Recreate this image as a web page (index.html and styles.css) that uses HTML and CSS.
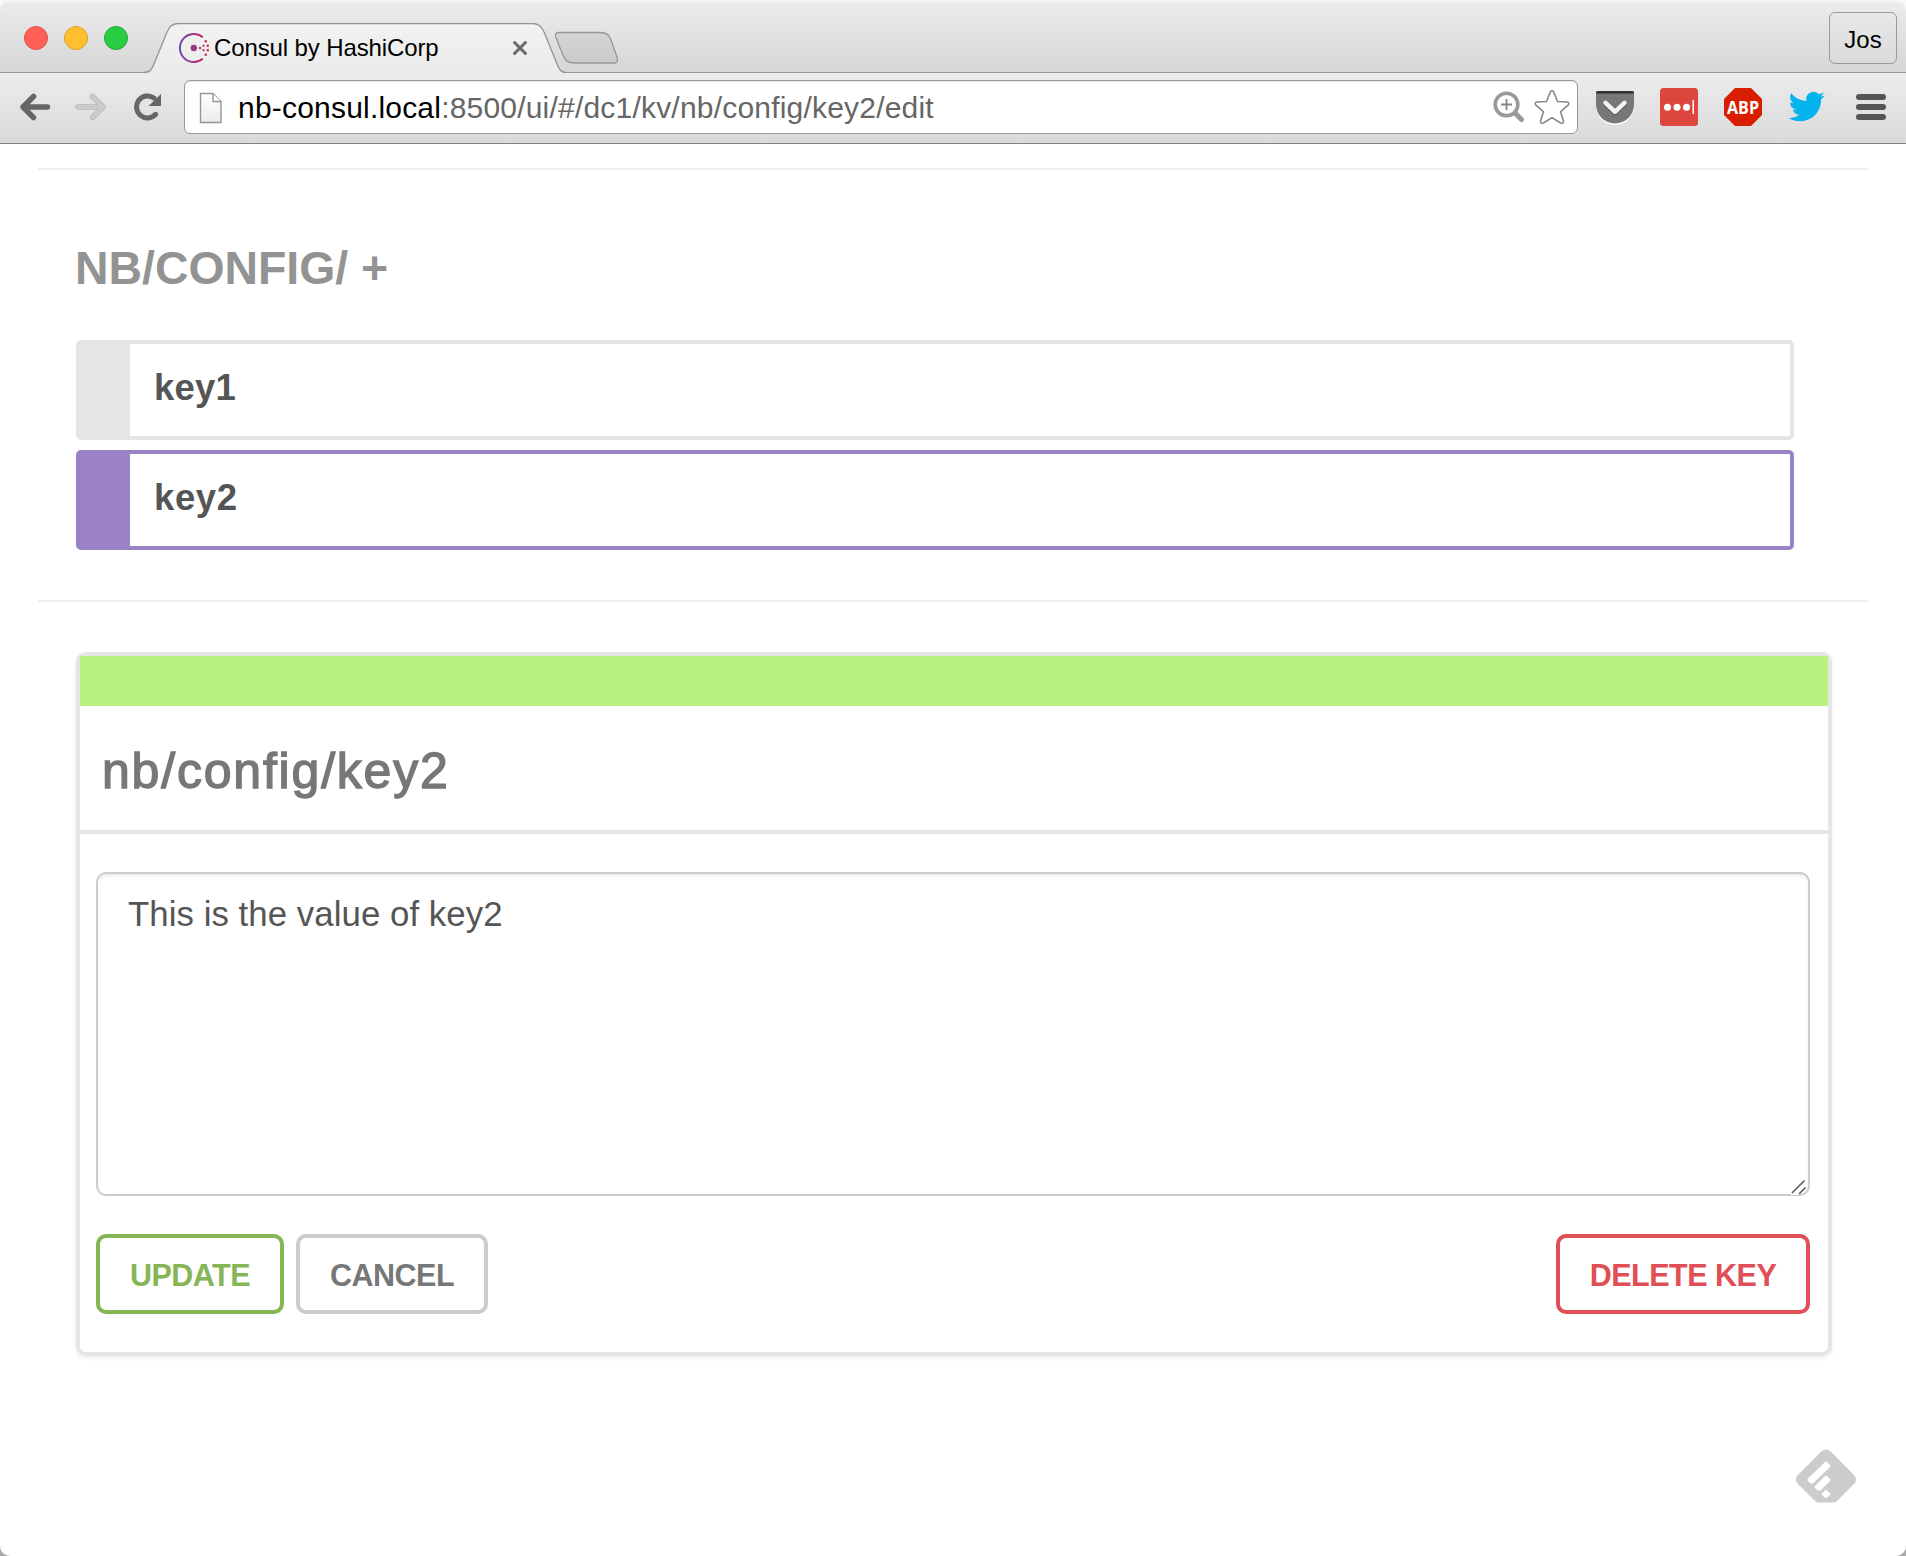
FILE: index.html
```html
<!DOCTYPE html>
<html lang="en">
<head>
<meta charset="utf-8">
<title>Consul by HashiCorp</title>
<link rel="stylesheet" href="styles.css">
</head>
<body>
<div class="window">
  <header class="tabstrip">
    <div class="lights"><i class="light red"></i><i class="light yellow"></i><i class="light green"></i></div>
    <div class="tab">
      <svg class="tab-shape" width="424" height="51" viewBox="0 0 424 51">
        <defs><linearGradient id="tabfill" x1="0" y1="0" x2="0" y2="1"><stop offset="0" stop-color="#f2f2f2"/><stop offset="1" stop-color="#ebebeb"/></linearGradient></defs>
        <path d="M0 51V49.500C6 49.500 7.500 47 10 41L22 11.500C25 4.500 27 .5 34 .5H388C395 .5 397.500 3.500 400.500 10L413 41C415.500 47 417 49.500 422 49.500V51Z" fill="url(#tabfill)"/>
        <path d="M0 49.500C6 49.500 7.500 47 10 41L22 11.500C25 4.500 27 .5 34 .5H388C395 .5 397.500 3.500 400.500 10L413 41C415.500 47 417 49.500 422 49.500" fill="none" stroke="#939393" stroke-width="1.300"/>
      </svg>
      <svg class="favicon" width="32" height="32" viewBox="0 0 32 32">
        <defs><linearGradient id="ring" x1="0" y1="0" x2="1" y2="0"><stop offset="0" stop-color="#694fb0"/><stop offset=".5" stop-color="#8f3d8c"/><stop offset="1" stop-color="#ca2754"/></linearGradient></defs>
        <path d="M24.800 5.200A14 14 0 1 0 24.800 26.800" fill="none" stroke="url(#ring)" stroke-width="2"/>
        <circle cx="15.800" cy="16" r="3.200" fill="#963b80"/>
        <g fill="#c62a52"><circle cx="22" cy="16" r="1.200"/><circle cx="25.500" cy="13.800" r="1.100"/><circle cx="25.500" cy="18.200" r="1.100"/><circle cx="27.700" cy="9.200" r="1.200"/><circle cx="27.700" cy="22.800" r="1.200"/><circle cx="29.800" cy="13.800" r="1.200"/><circle cx="29.800" cy="18.200" r="1.200"/></g>
      </svg>
      <span class="tab-title">Consul by HashiCorp</span>
      <svg class="tab-close" width="16" height="16" viewBox="0 0 16 16"><path d="M2.500 2.500L13.500 13.500M13.500 2.500L2.500 13.500" stroke="#6a6a6a" stroke-width="3" stroke-linecap="round"/></svg>
    </div>
    <svg class="newtab" width="66" height="34" viewBox="0 0 66 34">
      <defs><linearGradient id="ntfill" x1="0" y1="0" x2="0" y2="1"><stop offset="0" stop-color="#d4d4d4"/><stop offset="1" stop-color="#cacaca"/></linearGradient></defs>
      <path d="M6 1.500H47C54 1.500 56 4 58 9L64 26C65 30 64.500 32 61 32H21C14 32 12 29 9.500 23L3 6.500C1.800 3 2.500 1.500 6 1.500Z" fill="url(#ntfill)" stroke="#969696" stroke-width="1.300"/>
    </svg>
    <div class="profile">Jos</div>
  </header>
  <nav class="toolbar">
    <svg class="ico back" width="32" height="28" viewBox="0 0 32 28"><path d="M28.500 14H5M14.500 3.500L4 14L14.500 24.500" fill="none" stroke="#666" stroke-width="5.500" stroke-linecap="round" stroke-linejoin="round"/></svg>
    <svg class="ico fwd" width="32" height="28" viewBox="0 0 32 28"><path d="M3 14H27M17.500 3.500L28 14L17.500 24.500" fill="none" stroke="#b8b8b8" stroke-width="5.500" stroke-linecap="round" stroke-linejoin="round"/><path d="M3 14H27M17.500 3.500L28 14L17.500 24.500" fill="none" stroke="#cbcbcb" stroke-width="4" stroke-linecap="round" stroke-linejoin="round"/></svg>
    <svg class="ico reload" width="30" height="28" viewBox="0 0 30 28"><path d="M22.700 21.300A11 11 0 1 1 21 5" fill="none" stroke="#666" stroke-width="5" stroke-linecap="round"/><path d="M28 1V13H15.500Z" fill="#666"/></svg>
    <div class="omnibox">
      <svg class="page-ico" width="24" height="32" viewBox="0 0 24 32"><defs><linearGradient id="pg" x1="0" y1="0" x2="0" y2="1"><stop offset="0" stop-color="#fff"/><stop offset="1" stop-color="#ececec"/></linearGradient></defs><path d="M1.500 1.500H14L22 9.500V30.500H1.500Z" fill="url(#pg)" stroke="#959595" stroke-width="1.400"/><path d="M14 1.500V9.500H22" fill="#fff" stroke="#959595" stroke-width="1.400"/></svg>
      <span class="url"><b>nb-consul.local</b>:8500/ui/#/dc1/kv/nb/config/key2/edit</span>
      <svg class="zoom-ico" width="32" height="32" viewBox="0 0 32 32"><circle cx="13.500" cy="13.500" r="11.300" fill="none" stroke="#999" stroke-width="3.600"/><path d="M22 22L28.500 28.500" stroke="#999" stroke-width="5" stroke-linecap="round"/><path d="M13.500 8V19M8 13.500H19" stroke="#858585" stroke-width="1.800"/></svg>
      <svg class="star-ico" width="36" height="36" viewBox="0 0 36 36"><path d="M16.300 3Q18 .2 19.700 3L23.500 12.500L33.200 13Q36 14 34 16.200L26.500 22.800L29.500 32Q29.500 35 26.700 34L18 28.700L9.300 34Q6.500 35 6.500 32L9.500 22.800L2 16.200Q0 14 2.800 13L12.500 12.500Z" fill="#fff" stroke="#888" stroke-width="1.600" stroke-linejoin="round"/></svg>
    </div>
    <div class="exts">
      <svg width="38" height="38" viewBox="0 0 38 38"><path d="M0 5H38V18A19 19 0 0 1 0 18Z" fill="#fff"/><path d="M2 3H36Q38 3 38 5V16.500A19 19 0 0 1 0 16.500V5Q0 3 2 3Z" fill="#777"/><path d="M0 5.500V5Q0 3 2 3H36Q38 3 38 5V5.500Z" fill="#303030"/><path d="M9.500 16L19 24.800L28.500 16" fill="none" stroke="#4b4b4b" stroke-width="4.500" stroke-linecap="round" stroke-linejoin="round"/><path d="M9.500 14.800L19 23.800L28.500 14.800" fill="none" stroke="#f2f2f2" stroke-width="4.500" stroke-linecap="round" stroke-linejoin="round"/></svg>
      <svg width="38" height="38" viewBox="0 0 38 38"><rect width="38" height="38" rx="3.500" fill="#dd453f"/><g fill="#fff"><circle cx="7.500" cy="19.300" r="3.500"/><circle cx="17" cy="19.300" r="3.500"/><circle cx="26.500" cy="19.300" r="3.500"/><rect x="32.500" y="12" width="1.500" height="14"/></g></svg>
      <svg width="38" height="38" viewBox="0 0 38 38"><path d="M11 0H27L38 11V27L27 38H11L0 27V11Z" fill="#d91e00"/><text x="19" y="26" text-anchor="middle" textLength="32" lengthAdjust="spacingAndGlyphs" class="abp">ABP</text></svg>
      <svg width="38" height="38" viewBox="0 0 38 38"><path transform="translate(.7 .6) scale(1.500)" d="M23.950 4.570a10 10 0 0 1-2.820.77 4.960 4.960 0 0 0 2.160-2.720c-.95.550-2 .95-3.130 1.180a4.920 4.920 0 0 0-8.380 4.480C7.690 8.090 4.070 6.130 1.640 3.160a4.820 4.820 0 0 0-.67 2.480c0 1.710.87 3.210 2.190 4.100a4.900 4.900 0 0 1-2.230-.62v.06a4.920 4.920 0 0 0 3.950 4.830 5 5 0 0 1-2.210.080 4.940 4.940 0 0 0 4.600 3.420A9.870 9.870 0 0 1 0 19.540a13.990 13.990 0 0 0 7.560 2.210c9.050 0 14-7.500 14-13.980 0-.21 0-.42-.020-.63a9.940 9.940 0 0 0 2.460-2.550z" fill="#03b3ee"/></svg>
      <svg class="menu" width="30" height="28" viewBox="0 0 30 28"><g fill="#555"><rect y="1" width="30" height="6" rx="3"/><rect y="11" width="30" height="6" rx="3"/><rect y="21" width="30" height="6" rx="3"/></g></svg>
    </div>
  </nav>
  <main class="page">
    <section class="keys">
      <h2 class="heading">NB/CONFIG/ +</h2>
      <div class="key">key1</div>
      <div class="key active">key2</div>
    </section>
    <section class="panel">
      <div class="panel-bar"></div>
      <h3 class="panel-title">nb/config/key2</h3>
      <div class="panel-body">
        <div class="value">This is the value of key2
          <svg class="grip" width="16" height="16" viewBox="0 0 16 16"><path d="M0 16V5L11 0H16V5L8 16Z" fill="#fff"/><path d="M1 14L13.500 1.500M8 15L14.500 8.500" stroke="#606060" stroke-width="1.700"/></svg>
        </div>
        <div class="actions">
          <button class="btn update">UPDATE</button>
          <button class="btn cancel">CANCEL</button>
          <button class="btn delete">DELETE KEY</button>
        </div>
      </div>
    </section>
    <svg class="feedly" width="60" height="54" viewBox="0 0 60 54"><path d="M25.500 2.200Q30 -1 34.500 2.200L58.500 26.500Q61.500 30.500 58.500 34.500L42 51Q40 53.500 37 53.500H23Q20 53.500 18 51L1.500 34.500Q-1.500 30.500 1.500 26.500Z" fill="#ccc"/><g fill="#fff" stroke="#fff" stroke-width="2" stroke-linejoin="round"><path d="M30 13.500L33.500 17L16.500 33.500H14.500L12.500 30.500Z"/><path d="M30 27.500L33.500 31L24 40.500H22L19.500 38Z"/><path d="M30 42L33.300 45L31 47.500H29L26.700 45Z"/></g></svg>
  </main>
</div>
</body>
</html>
```
FILE: styles.css
```css
* { box-sizing: border-box; }
body { margin: 0; background: linear-gradient(#f8f8f8 50%, #aaa 50%); font-family: "Liberation Sans", Arial, sans-serif; }
svg { display: block; flex: none; }
.window { width: 1906px; height: 1556px; border-radius: 10px; overflow: hidden; background: #fff; display: flex; flex-direction: column; }

.tabstrip { height: 73px; flex: none; display: flex; align-items: flex-start; background: linear-gradient(#f6f6f6, #ebebeb 4px, #d6d6d6 72px); box-shadow: inset 0 -1px #939393; }
.lights { display: flex; gap: 16px; padding: 26px 0 0 24px; width: 144px; flex: none; }
.light { width: 24px; height: 24px; border-radius: 50%; flex: none; }
.red { background: #ff6159; border: 1px solid #e2504a; }
.yellow { background: #ffbf2f; border: 1px solid #dfa023; }
.green { background: #28cd41; border: 1px solid #1fab30; }
.tab { position: relative; width: 419px; height: 50px; margin-top: 23px; padding-left: 34px; display: flex; align-items: center; flex: none; }
.tab-shape { position: absolute; left: 0; top: 0; }
.favicon, .tab-title, .tab-close { position: relative; }
.tab-title { margin-left: 4px; width: 297px; font-size: 24px; letter-spacing: -0.12px; line-height: 50px; white-space: nowrap; color: #000; }
.tab-close { margin-left: 1px; }
.newtab { margin: 31px 0 0 -10px; position: relative; }
.profile { margin: 12px 9px 0 auto; width: 68px; height: 52px; border: 1px solid #9a9a9a; border-radius: 6px; background: linear-gradient(#e9e9e9, #dadada); font-size: 24px; line-height: 54px; text-align: center; color: #000; }

.toolbar { height: 71px; flex: none; display: flex; align-items: flex-start; padding: 7px 20px 0 19px; background: linear-gradient(#ececec, #dadada); border-bottom: 1px solid #7f7f7f; }
.ico { margin-top: 13px; }
.fwd { margin-left: 24px; }
.reload { margin-left: 26px; }
.omnibox { margin-left: 21px; width: 1394px; height: 54px; border: 1px solid #999; border-radius: 6px; background: #fff; box-shadow: inset 0 1px 1px #e4e4e4; display: flex; align-items: center; padding: 0 7px 0 14px; }
.page-ico { margin-top: 1px; }
.url { margin-left: 15px; flex: 1; font-size: 30px; letter-spacing: 0.2px; line-height: 54px; padding-top: 2px; color: #666; white-space: nowrap; }
.url b { font-weight: 400; color: #000; }
.star-ico { margin: -1px 0 0 10px; }
.zoom-ico { margin-right: -1px; }
.star-ico { flex: none; }
.exts { margin-left: 18px; padding-top: 8px; display: flex; gap: 26px; align-items: center; }
.menu { margin-left: 4px; }
.abp { font: 700 17px "Open Sans", "Noto Sans", sans-serif; fill: #fff; }

.page { flex: 1; padding: 24px 38px 0; }
.keys { height: 434px; border-top: 2px solid #eee; border-bottom: 2px solid #eee; padding: 72px 74px 0 37px; }
.heading { margin: 0 0 46px; height: 52px; font-size: 46.400px; line-height: 52px; font-weight: 700; color: #939393; white-space: nowrap; }
.key { height: 100px; margin: 0 0 10px 1px; border: 4px solid #e5e5e5; border-left-width: 54px; border-radius: 5px; padding-left: 24px; font-size: 36.500px; letter-spacing: 0.2px; line-height: 88px; font-weight: 700; color: #555; }
.key.active { border-color: #9b82c6; letter-spacing: 0.6px; }
.panel { margin: 50px 36px 0 38px; height: 704px; border: 4px solid #e5e5e5; border-radius: 10px; box-shadow: 0 2px 4px rgba(0,0,0,.08); }
.panel-bar { height: 50px; background: #b9f27f; }
.panel-title { margin: 0; height: 128px; border-bottom: 4px solid #e5e5e5; padding: 0 22px; font-size: 50px; letter-spacing: 1.800px; line-height: 130px; font-weight: 400; color: #777; -webkit-text-stroke: 1.400px #777; }
.panel-body { padding: 38px 18px 0 16px; }
.value { position: relative; height: 324px; border: 2px solid #ccc; border-radius: 10px; padding: 18px 30px; font-size: 34.800px; letter-spacing: 0.050px; line-height: 44px; color: #555; box-shadow: inset 0 2px 3px rgba(0,0,0,.08); }
.grip { position: absolute; right: 1px; bottom: -1px; }
.actions { display: flex; gap: 12px; margin-top: 38px; }
.btn { height: 80px; border: 4px solid #ccc; border-radius: 10px; background: #fff; padding: 2px 0 0; font: 700 30.500px "Liberation Sans", Arial, sans-serif; white-space: nowrap; color: #777; }
.update { width: 188px; letter-spacing: -0.500px; color: #85b555; border-color: #85b555; }
.cancel { width: 192px; letter-spacing: -0.500px; }
.delete { width: 254px; letter-spacing: -0.500px; margin-left: auto; color: #e04e56; border-color: #e04e56; }
.feedly { margin: 93px 12px 0 auto; }
```
